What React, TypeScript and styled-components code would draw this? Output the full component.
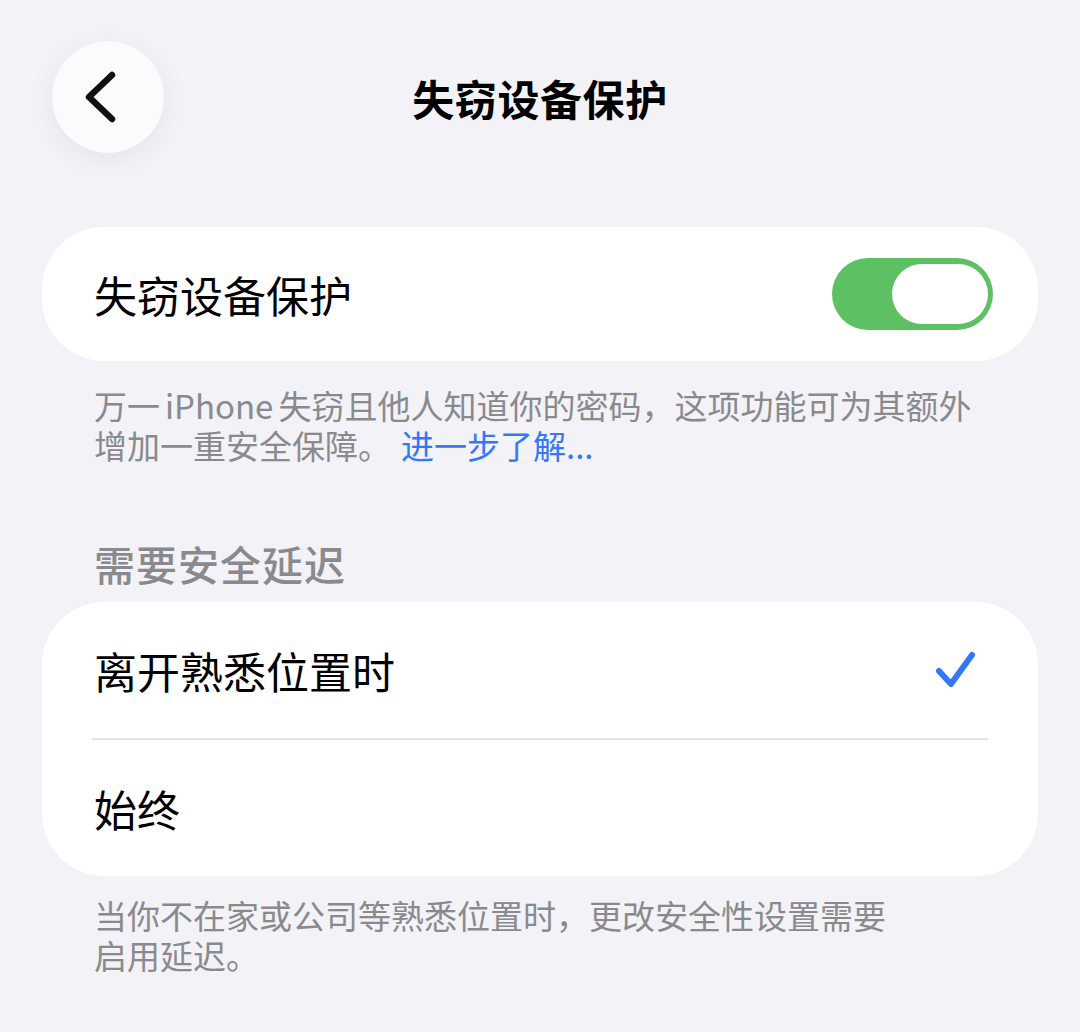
import React, { useState } from "react";
import styled, { createGlobalStyle } from "styled-components";

const GlobalStyle = createGlobalStyle`
  html, body {
    margin: 0;
    padding: 0;
    background: #f2f2f7;
  }
  body {
    font-family: "Noto Sans CJK SC", "Noto Sans", sans-serif;
    -webkit-font-smoothing: antialiased;
  }
`;

const Page = styled.div`
  width: 1080px;
  min-height: 1032px;
  box-sizing: border-box;
  padding: 41px 42px 0;
  background: #f2f2f7;
  display: flex;
  flex-direction: column;
`;

const NavBar = styled.div`
  display: grid;
  grid-template-columns: 112px 1fr 112px;
  align-items: center;
  height: 112px;
  margin-left: 10px;
  margin-right: 10px;
`;

const BackButton = styled.button`
  width: 112px;
  height: 112px;
  border: none;
  border-radius: 50%;
  background: #fbfbfd;
  box-shadow: 0 6px 28px rgba(0, 0, 0, 0.06);
  display: flex;
  align-items: center;
  justify-content: center;
  padding: 0 6px 0 0;
  cursor: pointer;
`;

const Title = styled.h1`
  margin: 0;
  text-align: center;
  font-size: 42px;
  font-weight: 700;
  letter-spacing: 0.6px;
  color: #000;
`;

const Card = styled.div<{ $first?: boolean }>`
  background: #fff;
  border-radius: 62px;
  margin-top: ${(p) => (p.$first ? "74px" : "14px")};
  display: flex;
  flex-direction: column;
`;

const Row = styled.div<{ $height?: number }>`
  height: ${(p) => p.$height ?? 136}px;
  display: flex;
  align-items: center;
  justify-content: space-between;
  padding: 0 45px 0 52px;
  box-sizing: border-box;
`;

const Label = styled.span`
  font-size: 43px;
  color: #000;
  line-height: 1;
`;

const Separator = styled.div`
  height: 2px;
  background: #e4e4e8;
  margin: 0 50px 0 50px;
`;

const Footer = styled.p<{ $gap?: number }>`
  margin: ${(p) => p.$gap ?? 24}px 0 0;
  padding: 0 52px;
  font-size: 33px;
  line-height: 40px;
  color: #8a8a8e;
`;

const Latin = styled.span`
  margin: 0 5px;
`;

const Link = styled.a`
  color: #3478f6;
  text-decoration: none;
  margin-left: 10px;
`;

const SectionHeader = styled.h2`
  margin: 73px 0 0;
  padding: 0 52px;
  font-size: 41px;
  line-height: 50px;
  font-weight: 500;
  color: #8a8a8e;
  letter-spacing: 1px;
`;

const Track = styled.button<{ $on: boolean }>`
  width: 161px;
  height: 72px;
  border: none;
  border-radius: 36px;
  padding: 6px 5px;
  background: ${(p) => (p.$on ? "#5dc062" : "#e3e3e8")};
  display: flex;
  justify-content: ${(p) => (p.$on ? "flex-end" : "flex-start")};
  cursor: pointer;
  box-sizing: border-box;
`;

const Knob = styled.span`
  width: 96px;
  height: 60px;
  border-radius: 30px;
  background: #fff;
`;

const Check = styled.svg`
  margin-right: 16px;
`;

const ChevronLeft = () => (
  <svg width="40" height="52" viewBox="0 0 40 52">
    <path
      d="M27 4 L4 26 L27 48"
      fill="none"
      stroke="#111"
      strokeWidth="6.5"
      strokeLinecap="round"
      strokeLinejoin="round"
    />
  </svg>
);

const options = [
  { id: "away", label: "离开熟悉位置时" },
  { id: "always", label: "始终" },
];

export default function App() {
  const [enabled, setEnabled] = useState(true);
  const [delay, setDelay] = useState("away");

  return (
    <>
      <GlobalStyle />
      <Page>
        <NavBar>
          <BackButton aria-label="返回">
            <ChevronLeft />
          </BackButton>
          <Title>失窃设备保护</Title>
          <span />
        </NavBar>

        <Card $first>
          <Row $height={134}>
            <Label>失窃设备保护</Label>
            <Track $on={enabled} onClick={() => setEnabled(!enabled)}>
              <Knob />
            </Track>
          </Row>
        </Card>
        <Footer>
          万一<Latin>iPhone</Latin>失窃且他人知道你的密码，这项功能可为其额外
          <br />
          增加一重安全保障。<Link href="#">进一步了解...</Link>
        </Footer>

        <SectionHeader>需要安全延迟</SectionHeader>
        <Card>
          {options.map((opt, index) => (
            <React.Fragment key={opt.id}>
              <Row onClick={() => setDelay(opt.id)}>
                <Label>{opt.label}</Label>
                {delay === opt.id && (
                  <Check width="42" height="40" viewBox="0 0 42 40">
                    <path
                      d="M4 21 L16 34 L37 5"
                      fill="none"
                      stroke="#3478f6"
                      strokeWidth="6"
                      strokeLinecap="round"
                      strokeLinejoin="round"
                    />
                  </Check>
                )}
              </Row>
              {index < options.length - 1 && <Separator />}
            </React.Fragment>
          ))}
        </Card>
        <Footer $gap={19}>
          当你不在家或公司等熟悉位置时，更改安全性设置需要
          <br />
          启用延迟。
        </Footer>
      </Page>
    </>
  );
}
